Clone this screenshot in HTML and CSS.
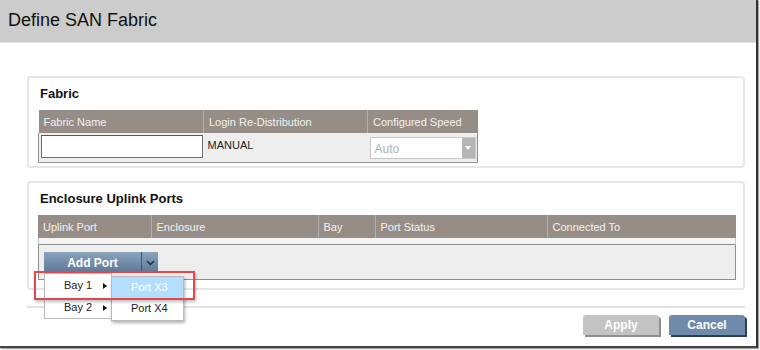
FILE: index.html
```html
<!DOCTYPE html>
<html lang="en">
<head>
    <meta charset="UTF-8">
    <title>Define SAN Fabric</title>
    <link rel="stylesheet" href="styles.css">
</head>
<body>
    <div class="dialog">
        <!-- Title bar -->
        <div class="dialog-header">Define SAN Fabric</div>

        <div class="dialog-body">
            <!-- Fabric section -->
            <div class="panel panel-fabric">
                <h2 class="panel-title">Fabric</h2>
                <table class="grid grid-fabric">
                    <tr>
                        <th class="col-name">Fabric Name</th>
                        <th class="col-login">Login Re-Distribution</th>
                        <th class="col-speed">Configured Speed</th>
                    </tr>
                    <tr class="grid-row">
                        <td><input class="text-input" type="text"></td>
                        <td class="manual">MANUAL</td>
                        <td>
                            <div class="select">
                                <span class="select-value">Auto</span>
                                <span class="select-arrow"></span>
                            </div>
                        </td>
                    </tr>
                </table>
            </div>

            <!-- Uplink ports section -->
            <div class="panel panel-uplink">
                <h2 class="panel-title">Enclosure Uplink Ports</h2>
                <table class="grid grid-uplink">
                    <tr>
                        <th class="col-uplink">Uplink Port</th>
                        <th class="col-encl">Enclosure</th>
                        <th class="col-bay">Bay</th>
                        <th class="col-status">Port Status</th>
                        <th>Connected To</th>
                    </tr>
                </table>
                <div class="grid-spacer"></div>
                <div class="grid-footer">
                    <div class="split-btn">
                        <button class="split-main">Add Port</button>
                        <button class="split-arrow">
                            <svg width="9" height="6" viewBox="0 0 9 6"><path d="M1 1 L4.5 4.5 L8 1" fill="none" stroke="#1f2a36" stroke-width="1.3"/></svg>
                        </button>

                        <!-- Open dropdown -->
                        <ul class="menu menu-bays">
                            <li>Bay 1 <span class="tri"></span></li>
                            <li>Bay 2 <span class="tri"></span></li>
                        </ul>
                        <ul class="menu menu-ports">
                            <li class="active">Port X3</li>
                            <li>Port X4</li>
                        </ul>
                        <div class="callout"></div>
                    </div>
                </div>
            </div>

            <!-- Footer buttons -->
            <div class="dialog-footer">
                <button class="btn btn-apply">Apply</button>
                <button class="btn btn-cancel">Cancel</button>
            </div>
        </div>
    </div>
</body>
</html>
```

FILE: styles.css
```css
/* Basic reset */
* {
    margin: 0;
    padding: 0;
    box-sizing: border-box;
}

body {
    font-family: 'Liberation Sans', Arial, sans-serif;
    background: #fff;
    color: #222;
    width: 760px;
    height: 350px;
    overflow: hidden;
}

/* Dialog frame */
.dialog {
    width: 758px;
    height: 348px;
    background: #fff;
    border-right: 2px solid #333;
    border-bottom: 2px solid #444;
    box-shadow: 1px 1px 1px rgba(0, 0, 0, 0.35);
}

.dialog-header {
    height: 43px;
    background: #cccccc;
    border-bottom: 1px solid #e2e2e2;
    font-size: 18px;
    padding: 10px 0 0 8px;
    color: #111;
}

.dialog-body {
    padding: 33px 11px 0 27px;
}

/* Panels */
.panel {
    border: 2px solid #e6e6e6;
    border-radius: 4px;
    padding: 0 9px 0 9px;
}

.panel-fabric {
    height: 92px;
}

.panel-uplink {
    height: 109px;
    margin-top: 13px;
}

.panel-title {
    font-size: 13px;
    font-weight: bold;
    color: #111;
    padding: 8px 0 0 2px;
    height: 32px;
}

/* Tables */
.grid {
    border-collapse: collapse;
    font-size: 11px;
}

.grid th {
    background: #978d87;
    color: #f2f2f2;
    font-weight: normal;
    text-align: left;
    height: 23px;
    padding: 0 0 0 5px;
    border-left: 1px solid #b7afa9;
}

.grid th:first-child {
    border-left: none;
}

.grid-fabric {
    width: 440px;
}

.col-name { width: 165px; }
.col-login { width: 164px; }

.grid-row td {
    background: #eeeeee;
    height: 29px;
    vertical-align: top;
    border-bottom: 1px solid #8f8f8f;
    padding-top: 2px;
}

.grid-row td:first-child {
    border-left: 1px solid #8f8f8f;
    padding-left: 2px;
}

.grid-row td:last-child {
    border-right: 1px solid #8f8f8f;
    padding-left: 2px;
}

.text-input {
    width: 162px;
    height: 23px;
    border: 1px solid #6f6f6f;
    border-top-color: #555;
    background: #fff;
}

.manual {
    font-size: 11px;
    padding-left: 4px;
    padding-top: 6px !important;
    color: #222;
}

.select {
    display: flex;
    width: 106px;
    height: 22px;
    margin-top: 2px;
    border: 1px solid #c8c8c8;
    background: #fff;
}

.select-value {
    flex: 1;
    color: #a9b3bd;
    font-size: 12px;
    padding: 4px 0 0 4px;
}

.select-arrow {
    width: 13px;
    background: #b5b5b5;
    position: relative;
}

.select-arrow::after {
    content: "";
    position: absolute;
    left: 3px;
    top: 8px;
    border-left: 3.5px solid transparent;
    border-right: 3.5px solid transparent;
    border-top: 4px solid #fff;
}

.grid-uplink {
    width: 698px;
}

.col-uplink { width: 113px; }
.col-encl { width: 167px; }
.col-bay { width: 57px; }
.col-status { width: 172px; }

.grid-spacer {
    width: 698px;
    height: 7px;
    background: #f4f4f4;
    border-left: 1px solid #c9c9c9;
    border-right: 1px solid #c9c9c9;
    border-bottom: 1px solid #8f8f8f;
}

.grid-footer {
    width: 698px;
    height: 35px;
    background: #eeeeee;
    border: 1px solid #8f8f8f;
    border-top: none;
    padding: 7px 0 0 5px;
}

/* Split button */
.split-btn {
    display: flex;
    position: relative;
    width: 114px;
    height: 21px;
}

.split-btn button {
    border: none;
    background: linear-gradient(#8aa3bd, #5c7895);
    color: #fff;
    font-family: inherit;
    font-weight: bold;
    font-size: 12px;
}

.split-main {
    width: 98px;
    border-right: 1px solid #41566d !important;
}

.split-arrow {
    flex: 1;
    display: flex;
    align-items: center;
    justify-content: center;
}

/* Dropdown menus */
.menu {
    list-style: none;
    position: absolute;
    background: #fff;
    border: 1px solid #b9b9b9;
    font-size: 11px;
    color: #222;
    box-shadow: 1px 2px 3px rgba(0, 0, 0, 0.3);
}

.menu-bays {
    left: 0;
    top: 21px;
    width: 68px;
    height: 46px;
    box-shadow: none;
}

.menu-bays li {
    height: 22px;
    padding: 5px 0 0 19px;
    position: relative;
}

.tri {
    position: absolute;
    left: 58px;
    top: 9px;
    border-top: 3.5px solid transparent;
    border-bottom: 3.5px solid transparent;
    border-left: 4px solid #111;
}

.menu-ports {
    left: 67px;
    top: 24px;
    width: 73px;
    height: 45px;
    z-index: 2;
}

.menu-ports li {
    height: 21px;
    padding: 4px 0 0 19px;
}

.menu-ports li.active {
    background: #b3defc;
    color: #fff;
}

/* Red highlight box */
.callout {
    position: absolute;
    left: -10px;
    top: 19px;
    width: 161px;
    height: 29px;
    border: 2px solid #e5484c;
    z-index: 3;
    box-shadow: 1px 2px 3px rgba(0, 0, 0, 0.25);
}

/* Footer */
.dialog-footer {
    margin-top: 16px;
    border-top: 2px solid #e3e3e3;
    padding-top: 7px;
    display: flex;
    justify-content: flex-end;
    gap: 10px;
}

.btn {
    height: 20px;
    border: none;
    color: #fff;
    font-family: inherit;
    font-weight: bold;
    font-size: 12px;
    border-radius: 3px 3px 0 0;
}

.btn-apply {
    width: 76px;
    background: #c3c3c3;
    box-shadow: 2px 2px 0 #8f8f8f;
}

.btn-cancel {
    width: 76px;
    background: #6f8bab;
    box-shadow: 2px 2px 0 #2b3f57;
}
```
